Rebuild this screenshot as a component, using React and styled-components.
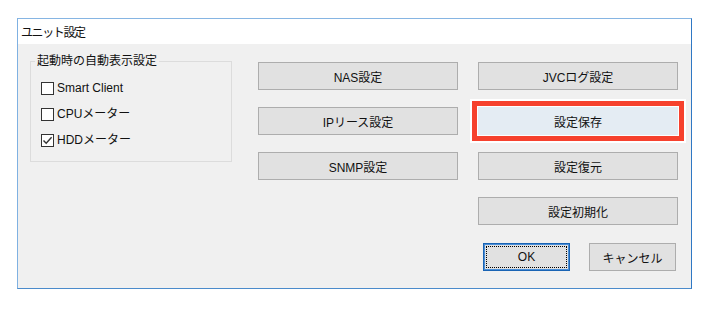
// react
import React from 'react'

// styled
import styled, { createGlobalStyle } from 'styled-components'

const FONT = '"Liberation Sans", "Noto Sans CJK JP", sans-serif'

const OPTIONS = [
	{ label: 'Smart Client', checked: false },
	{ label: 'CPUメーター', checked: false },
	{ label: 'HDDメーター', checked: true }
]

const LEFT_BUTTONS = ['NAS設定', 'IPリース設定', 'SNMP設定']

const RIGHT_BUTTONS = [
	{ label: 'JVCログ設定' },
	{ label: '設定保存', highlighted: true },
	{ label: '設定復元' },
	{ label: '設定初期化' }
]

const CheckMark = () => (
	<svg width='11' height='11' viewBox='0 0 11 11'>
		<path d='M1.5 5.5 L4.2 8.3 L9.6 2.2' fill='none' stroke='#333' strokeWidth='1.4'/>
	</svg>
)

const App = () => (
	<>
		<GlobalStyle/>
		<Stage>
			<Window>
				<TitleBar>ユニット設定</TitleBar>
				<Body>
					<Group>
						<Legend>起動時の自動表示設定</Legend>
						{OPTIONS.map(({ label, checked }) => (
							<CheckRow key={label}>
								<Box>{checked && <CheckMark/>}</Box>
								<span>{label}</span>
							</CheckRow>
						))}
					</Group>
					<Column>
						{LEFT_BUTTONS.map(label => (
							<Button key={label}>{label}</Button>
						))}
					</Column>
					<Column right>
						{RIGHT_BUTTONS.map(({ label, highlighted }) => (
							<Button key={label} highlighted={highlighted}>{label}</Button>
						))}
						<DialogActions>
							<Button small focused>OK</Button>
							<Button small>キャンセル</Button>
						</DialogActions>
					</Column>
				</Body>
			</Window>
		</Stage>
	</>
)

export default App

const GlobalStyle = createGlobalStyle`
	body {
		margin: 0;
		background: #fff;
		font-family: ${FONT};
		font-size: 12px;
		color: #111;
	}
`

const Stage = styled.div`
	padding: 18px 0 0 17px;
`

const Window = styled.div`
	box-sizing: border-box;
	width: 675px;
	border: 1px solid;
	border-color: #86b5e3 #2f78c4 #4b8bcb #7fb1e2;
`

const TitleBar = styled.div`
	height: 25px;
	display: flex;
	align-items: center;
	padding-left: 3px;
	background: #fff;
	font-size: 12px;
	letter-spacing: -1.4px;
`

const Body = styled.div`
	display: flex;
	align-items: flex-start;
	padding: 18px 13px 17px 12px;
	background: #f0f0f0;
`

const Group = styled.fieldset`
	box-sizing: border-box;
	width: 202px;
	margin: -9px 26px 0 0;
	padding: 13px 0 14px 10px;
	border: 1px solid #dcdcdc;
	display: flex;
	flex-direction: column;
	gap: 13px;
`

const Legend = styled.legend`
	margin-left: -6px;
	padding: 0 2px;
	line-height: 16px;
	font-size: 12px;
`

const CheckRow = styled.label`
	display: flex;
	align-items: center;
	gap: 3px;
	height: 13px;
	line-height: 13px;
	font-size: 12px;
`

const Box = styled.span`
	box-sizing: border-box;
	width: 13px;
	height: 13px;
	border: 1px solid #333;
	background: #fff;
	display: flex;
	align-items: center;
	justify-content: center;
`

const Column = styled.div`
	display: flex;
	flex-direction: column;
	gap: 17px;
	width: 200px;
	margin-left: ${props => props.right ? '20px' : '0'};
`

const Button = styled.button`
	box-sizing: border-box;
	width: ${props => props.small ? '87px' : '100%'};
	height: 28px;
	padding: 0;
	border: 1px solid ${props => props.highlighted ? '#e4ecf3' : props.focused ? '#1a64b4' : '#adadad'};
	background: ${props => props.highlighted ? '#e4ecf3' : '#e1e1e1'};
	font-family: ${FONT};
	font-size: 12px;
	color: #111;
	box-shadow: ${props => props.highlighted
		? '0 0 0 1px #fff, 0 0 0 6px #f6412d, 0 0 0 8px #fff'
		: props.focused ? 'inset 0 0 0 1px #4b8ed6' : 'none'};
	outline: ${props => props.focused ? '1px dotted #000' : 'none'};
	outline-offset: -4px;
`

const DialogActions = styled.div`
	display: flex;
	gap: 19px;
	padding-left: 5px;
	margin-top: 1px;
`
